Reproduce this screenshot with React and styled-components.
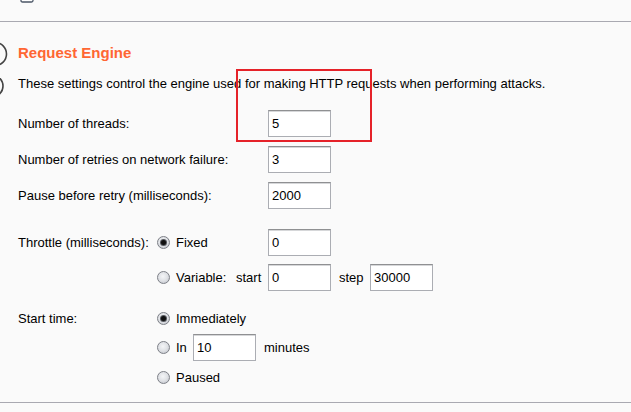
import React, { useState } from "react";
import styled, { createGlobalStyle } from "styled-components";

const GlobalStyle = createGlobalStyle`
  html, body {
    margin: 0;
    padding: 0;
    background: #fafafa;
  }
  body {
    font-family: "Liberation Sans", Arial, sans-serif;
    font-size: 13px;
    color: #000;
    overflow: hidden;
  }
`;

function RequestEngine() {
  const [throttle, setThrottle] = useState("fixed");
  const [start, setStart] = useState("now");

  return (
    <Page>
      <TopBar>
        <svg width="14" height="3" viewBox="0 0 14 3">
          <path d="M1 -4 V0.5 Q1 2 2.5 2 H11.5 Q13 2 13 0.5 V-4" fill="#fff" stroke="#4b5666" strokeWidth="1.3" />
        </svg>
      </TopBar>

      <Section>
        <Gutter>
          <svg width="8" height="26" viewBox="0 0 8 26">
            <circle cx="-5" cy="12" r="11.5" fill="none" stroke="#444" strokeWidth="1.6" />
          </svg>
          <svg width="5" height="18" viewBox="0 0 5 18">
            <circle cx="-8" cy="8" r="11" fill="none" stroke="#444" strokeWidth="1.6" />
          </svg>
        </Gutter>

        <Content>
          <Title>Request Engine</Title>
          <Description>
            These settings control the engine used for making HTTP requests when performing attacks.
          </Description>

          <FieldGroup>
            <Row>
              <Label $width={250}>Number of threads:</Label>
              <TextBox defaultValue="5" />
            </Row>
            <Row>
              <Label $width={250}>Number of retries on network failure:</Label>
              <TextBox defaultValue="3" />
            </Row>
            <Row>
              <Label $width={250}>Pause before retry (milliseconds):</Label>
              <TextBox defaultValue="2000" />
            </Row>
          </FieldGroup>

          <ThrottleGroup>
            <Row>
              <Label $width={139}>Throttle (milliseconds):</Label>
              <Radio checked={throttle === "fixed"} onClick={() => setThrottle("fixed")} />
              <OptionText $width={92}>Fixed</OptionText>
              <TextBox defaultValue="0" />
            </Row>
            <Row>
              <Label $width={139} />
              <Radio checked={throttle === "variable"} onClick={() => setThrottle("variable")} />
              <OptionText $width={60}>Variable:</OptionText>
              <OptionText $width={32}>start</OptionText>
              <TextBox defaultValue="0" />
              <OptionText $width={39} $pad={8}>step</OptionText>
              <TextBox defaultValue="30000" />
            </Row>
          </ThrottleGroup>

          <StartGroup>
            <RadioRow>
              <Label $width={139}>Start time:</Label>
              <Radio checked={start === "now"} onClick={() => setStart("now")} />
              <OptionText>Immediately</OptionText>
            </RadioRow>
            <Row>
              <Label $width={139} />
              <Radio checked={start === "in"} onClick={() => setStart("in")} />
              <OptionText $width={17}>In</OptionText>
              <TextBox defaultValue="10" />
              <OptionText $pad={8}>minutes</OptionText>
            </Row>
            <RadioRow>
              <Label $width={139} />
              <Radio checked={start === "paused"} onClick={() => setStart("paused")} />
              <OptionText>Paused</OptionText>
            </RadioRow>
          </StartGroup>
        </Content>
      </Section>

      <Divider />
      <Highlight />
    </Page>
  );
}

function Radio({ checked, onClick }) {
  return (
    <RadioCircle onClick={onClick}>
      {checked && <RadioDot />}
    </RadioCircle>
  );
}

export default function App() {
  return (
    <>
      <GlobalStyle />
      <RequestEngine />
    </>
  );
}

const Page = styled.div`
  position: relative;
  width: 631px;
  height: 412px;
  overflow: hidden;
`;

const TopBar = styled.div`
  height: 22px;
  box-sizing: border-box;
  border-bottom: 1px solid #a9a9b1;
  padding-left: 20px;

  svg {
    display: block;
  }
`;

const Section = styled.div`
  display: flex;
`;

const Gutter = styled.div`
  width: 18px;
  display: flex;
  flex-direction: column;
  padding-top: 20px;
  gap: 10px;

  svg {
    display: block;
  }
`;

const Content = styled.div`
  flex: 1;
  display: flex;
  flex-direction: column;
`;

const Title = styled.div`
  margin-top: 22px;
  line-height: 18px;
  font-size: 15px;
  font-weight: bold;
  color: #ff6633;
`;

const Description = styled.div`
  margin-top: 14px;
  line-height: 16px;
  white-space: nowrap;
`;

const FieldGroup = styled.div`
  margin-top: 18px;
  display: flex;
  flex-direction: column;
  gap: 9px;
`;

const ThrottleGroup = styled.div`
  margin-top: 20px;
  display: flex;
  flex-direction: column;
  gap: 8px;
`;

const StartGroup = styled.div`
  margin-top: 17px;
  display: flex;
  flex-direction: column;
  gap: 6px;
`;

const Row = styled.div`
  display: flex;
  align-items: center;
  height: 27px;
`;

const RadioRow = styled(Row)`
  height: 20px;
`;

const Label = styled.div`
  width: ${(p) => p.$width}px;
  flex-shrink: 0;
  white-space: nowrap;
`;

const OptionText = styled.div`
  box-sizing: border-box;
  ${(p) => (p.$width ? `width: ${p.$width}px;` : "")}
  padding-left: ${(p) => p.$pad || 0}px;
  flex-shrink: 0;
  white-space: nowrap;
`;

const TextBox = styled.input`
  width: 63px;
  height: 27px;
  box-sizing: border-box;
  border: 1px solid #abadb3;
  border-top-color: #8f9092;
  box-shadow: inset 0 1px 0 #d6d7d9;
  background: #fff;
  padding: 0 3px;
  font-family: "Liberation Sans", Arial, sans-serif;
  font-size: 13px;
  color: #000;
  outline: none;
  flex-shrink: 0;
`;

const RadioCircle = styled.span`
  width: 13px;
  height: 13px;
  box-sizing: border-box;
  margin: 0 6px 0 0;
  border-radius: 50%;
  border: 1px solid #7d8087;
  background: radial-gradient(circle at 45% 40%, #f4f5f7 0%, #dfe1e5 50%, #b9bcc3 100%);
  display: flex;
  align-items: center;
  justify-content: center;
  flex-shrink: 0;
  cursor: pointer;
`;

const RadioDot = styled.span`
  width: 5px;
  height: 5px;
  border-radius: 50%;
  background: #111;
  box-shadow: 0 0 0 1px #55585e;
`;

const Divider = styled.div`
  margin-top: 15px;
  border-top: 1px solid #a9a9b1;
`;

const Highlight = styled.div`
  position: absolute;
  left: 236px;
  top: 69px;
  width: 136px;
  height: 73px;
  box-sizing: border-box;
  border: 2px solid #e52229;
  pointer-events: none;
`;
